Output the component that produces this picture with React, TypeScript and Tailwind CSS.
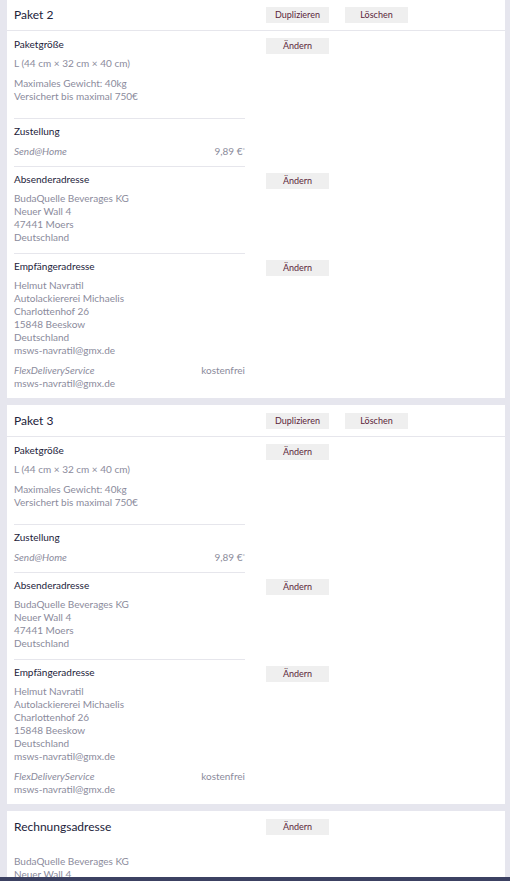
import React from 'react';

interface Paket {
  name: string;
}

const FONT = { fontFamily: 'Lato, "Noto Sans", sans-serif' };

const absender = ['BudaQuelle Beverages KG', 'Neuer Wall 4', '47441 Moers', 'Deutschland'];
const empfaenger = [
  'Helmut Navratil',
  'Autolackiererei Michaelis',
  'Charlottenhof 26',
  '15848 Beeskow',
  'Deutschland',
  'msws-navratil@gmx.de',
];

const SmallButton: React.FC<{ label: string; className?: string }> = ({ label, className = '' }) => (
  <button
    type="button"
    className={`w-[63px] h-[16px] bg-[#efefef] text-[9px] leading-[16px] text-[#5b1f3a] text-center ${className}`}
  >
    {label}
  </button>
);

const Section: React.FC<{
  title: string;
  last?: boolean;
  button?: boolean;
  pt?: string;
  pb?: string;
  btnTop?: string;
  children: React.ReactNode;
}> = ({ title, last = false, button = true, pt = 'pt-[7px]', pb = 'pb-[8px]', btnTop = 'mt-[7px]', children }) => (
  <div className="flex">
    <div className={`w-[231px] ${pt} ${pb} ${last ? '' : 'border-b border-[#e6e6ec]'}`}>
      <div className="text-[10px] leading-[13px] text-[#22223a]">{title}</div>
      {children}
    </div>
    {button && <SmallButton label="Ändern" className={`ml-[21px] ${btnTop}`} />}
  </div>
);

const Lines: React.FC<{ lines: string[]; className?: string }> = ({ lines, className = '' }) => (
  <div className={`text-[10px] leading-[13px] text-[#8b8b9c] ${className}`}>
    {lines.map((l) => (
      <div key={l}>{l}</div>
    ))}
  </div>
);

const PaketCard: React.FC<{ paket: Paket; className?: string }> = ({ paket, className = '' }) => (
  <div className={`bg-white pl-[7px] ${className}`}>
    <div className="flex items-center h-[32px] border-b border-[#e6e6ec] -ml-[7px] pl-[7px]">
      <div className="w-[252px] text-[12px] text-[#22223a]">{paket.name}</div>
      <SmallButton label="Duplizieren" />
      <SmallButton label="Löschen" className="ml-[16px]" />
    </div>
    <Section title="Paketgröße" pt="pt-[7px]" pb="pb-[15px]">
      <Lines lines={['L (44 cm × 32 cm × 40 cm)']} className="mt-[6px]" />
      <Lines lines={['Maximales Gewicht: 40kg', 'Versichert bis maximal 750€']} className="mt-[7px]" />
    </Section>
    <Section title="Zustellung" pt="pt-[6px]" button={false}>
      <div className="mt-[7px] flex justify-between text-[10px] leading-[13px] text-[#8b8b9c]">
        <span className="italic">Send@Home</span>
        <span>
          9,89 €<sup className="text-[6px]">*</sup>
        </span>
      </div>
    </Section>
    <Section title="Absenderadresse" pt="pt-[6px]" pb="pb-[9px]" btnTop="mt-[6px]">
      <Lines lines={absender} className="mt-[6px]" />
    </Section>
    <Section title="Empfängeradresse" pt="pt-[6px]" pb="pb-[8px]" btnTop="mt-[6px]" last>
      <Lines lines={empfaenger} className="mt-[6px]" />
      <div className="mt-[7px] flex justify-between text-[10px] leading-[13px] text-[#8b8b9c]">
        <span className="italic">FlexDeliveryService</span>
        <span>kostenfrei</span>
      </div>
      <Lines lines={['msws-navratil@gmx.de']} />
    </Section>
  </div>
);

export default function App() {
  return (
    <div className="h-[881px] overflow-hidden bg-[#e6e6ee] pl-[7px] pr-[5px] relative" style={FONT}>
      <PaketCard paket={{ name: 'Paket 2' }} className="-mt-[1px]" />
      <PaketCard paket={{ name: 'Paket 3' }} className="mt-[7px]" />
      <div className="bg-white pl-[7px] mt-[7px]">
        <div className="flex items-center h-[32px]">
          <div className="w-[252px] text-[12px] text-[#22223a]">Rechnungsadresse</div>
          <SmallButton label="Ändern" />
        </div>
        <Lines lines={absender} className="pt-[12px]" />
      </div>
      <div className="fixed bottom-0 left-0 right-0 h-[4px] bg-[#3c4162]" />
    </div>
  );
}
